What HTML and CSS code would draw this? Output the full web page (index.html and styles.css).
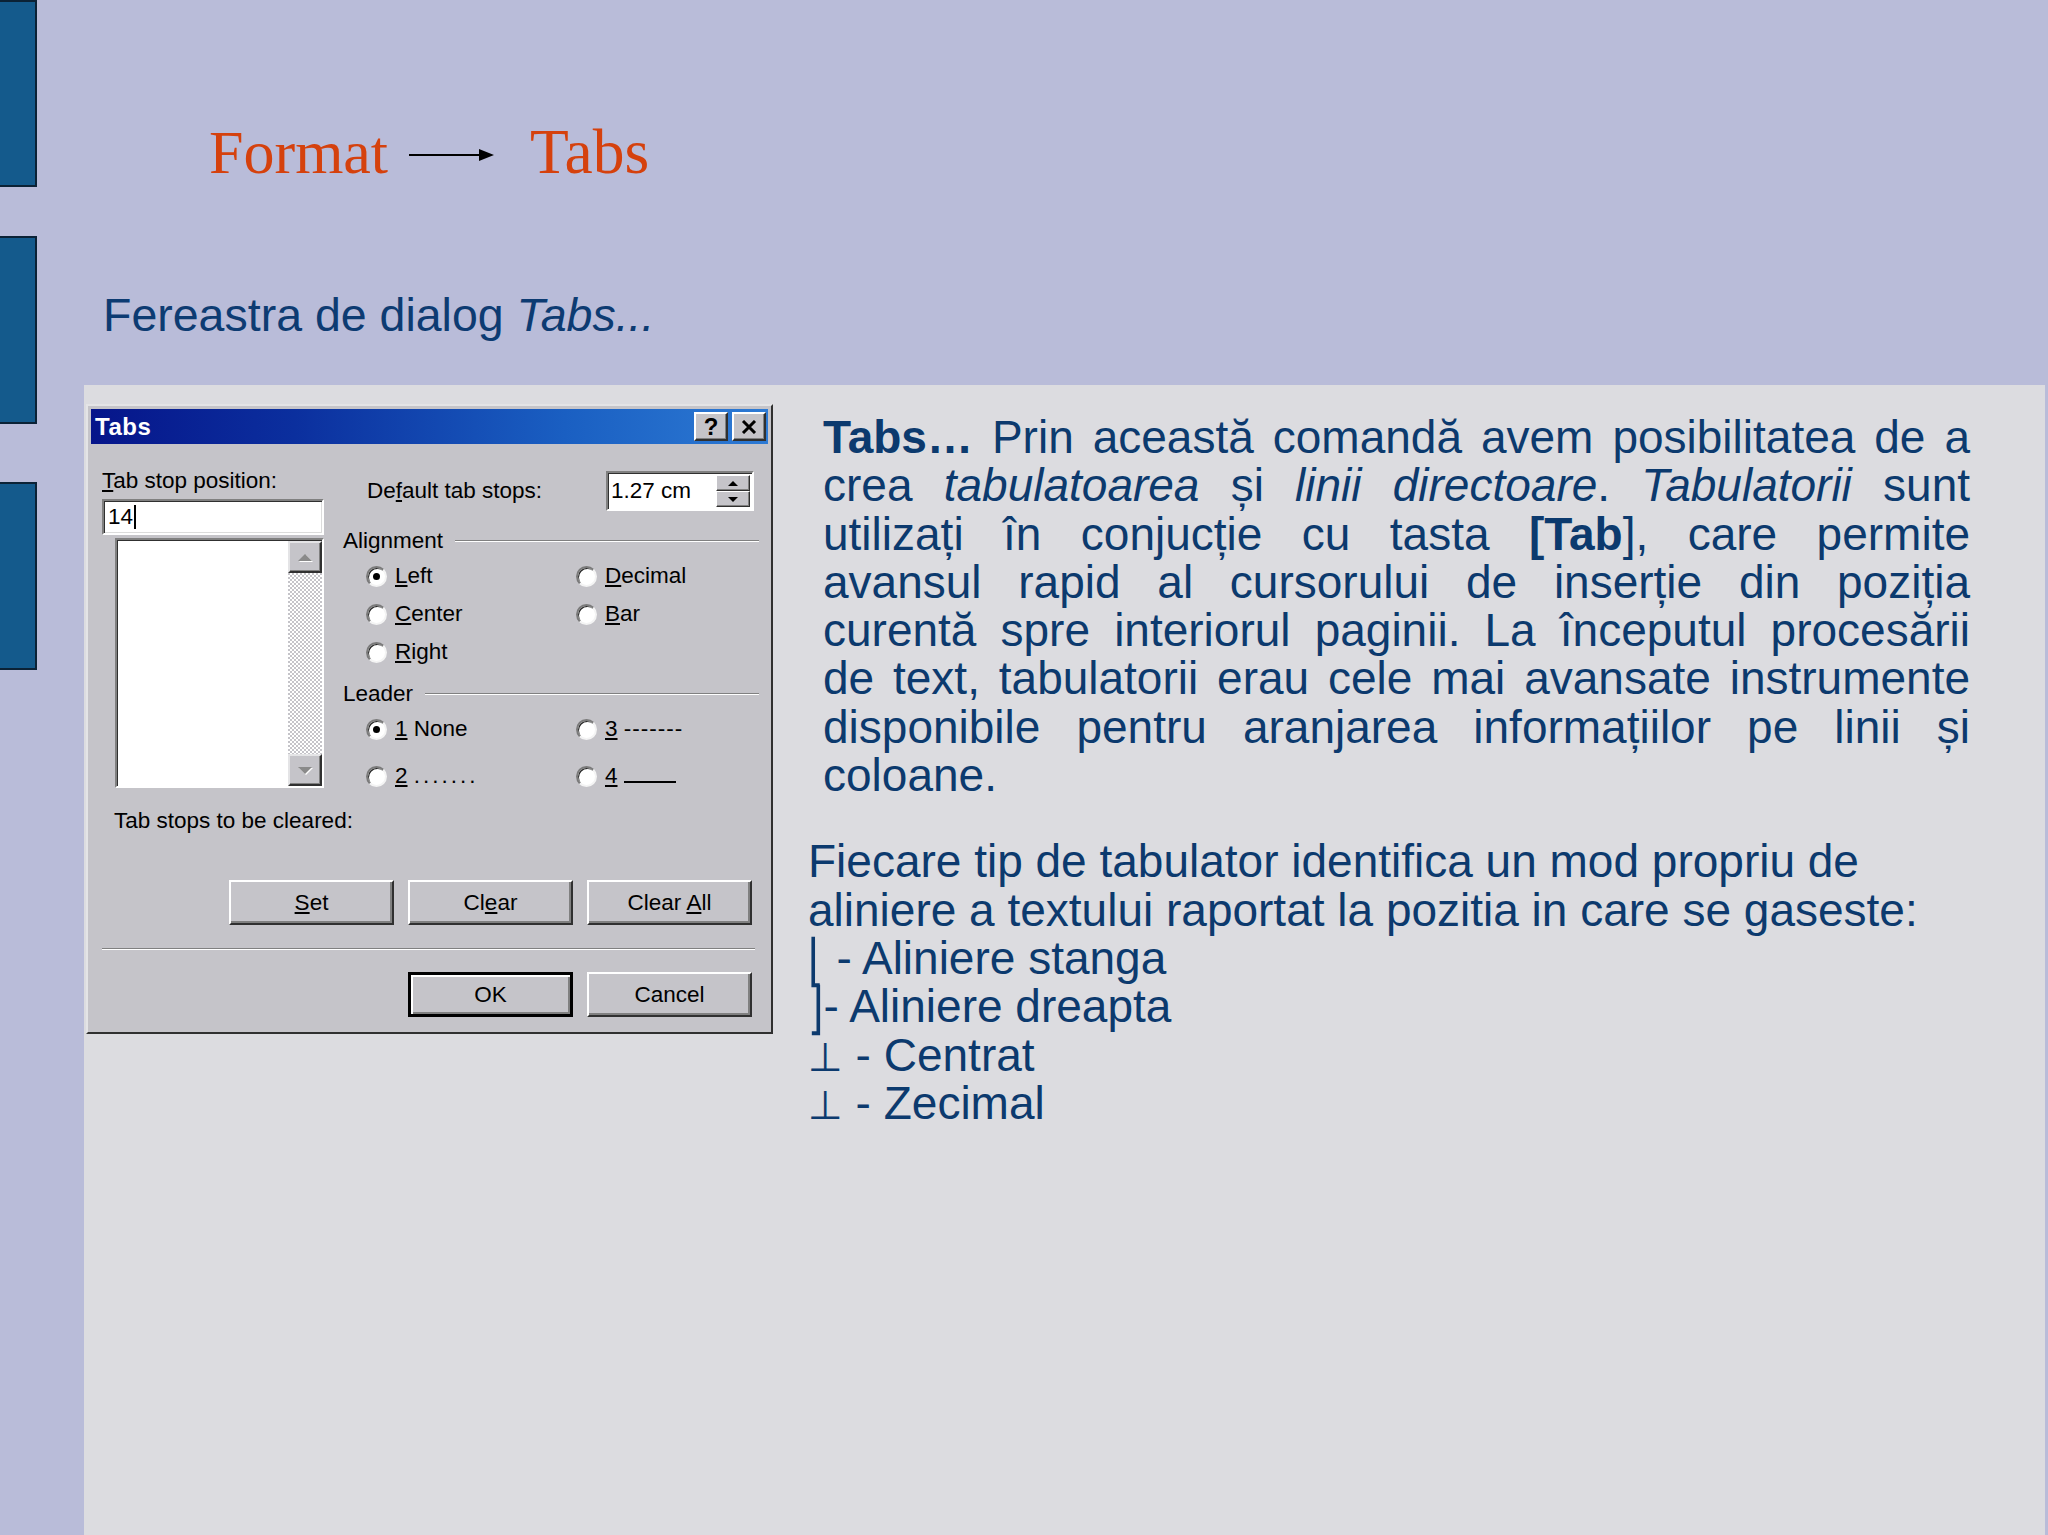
FILE: index.html
```html
<!DOCTYPE html>
<html lang="ro">
<head>
<meta charset="utf-8">
<title>Format - Tabs</title>
<link rel="stylesheet" href="styles.css">
</head>
<body>
<div class="slide">
  <div class="rail">
    <div class="bar bar1"></div>
    <div class="bar bar2"></div>
    <div class="bar bar3"></div>
  </div>
  <div class="main">
    <header class="head">
      <h1 class="title">
        <span>Format</span>
        <svg class="arrow" width="85" height="14" viewBox="0 0 85 14"><line x1="0" y1="7" x2="72" y2="7" stroke="#000" stroke-width="2.2"/><polygon points="70,1 85,7 70,13" fill="#000"/></svg>
        <span>Tabs</span>
      </h1>
      <h2 class="subtitle">Fereastra de dialog <em>Tabs...</em></h2>
    </header>
    <section class="panel">
      <div class="dialog">
        <div class="titlebar">
          <span class="tb-text">Tabs</span>
          <div class="tb-btns">
            <div class="tb-btn">?</div>
            <div class="tb-btn"><svg width="16" height="14" viewBox="0 0 16 14"><path d="M2 1 L14 13 M14 1 L2 13" stroke="#000" stroke-width="3"/></svg></div>
          </div>
        </div>
        <div class="dlg-body">
          <div class="dlg-top">
            <div class="col-left">
              <div class="lbl"><u>T</u>ab stop position:</div>
              <div class="field"><span>14</span><span class="caret"></span></div>
              <div class="listbox">
                <div class="lb-area"></div>
                <div class="vscroll">
                  <div class="sb-btn"><span class="tri-up dis"></span></div>
                  <div class="sb-track"></div>
                  <div class="sb-btn"><span class="tri-down dis"></span></div>
                </div>
              </div>
            </div>
            <div class="col-right">
              <div class="default-row">
                <div class="lbl">De<u>f</u>ault tab stops:</div>
                <div class="spin">
                  <div class="spin-text">1.27 cm</div>
                  <div class="spin-btns">
                    <div class="spin-btn"><span class="tri-up small"></span></div>
                    <div class="spin-btn"><span class="tri-down small"></span></div>
                  </div>
                </div>
              </div>
              <div class="group-head"><span>Alignment</span><span class="etch"></span></div>
              <div class="radios align">
                <div class="opt"><span class="radio on"></span><span><u>L</u>eft</span></div>
                <div class="opt"><span class="radio"></span><span><u>D</u>ecimal</span></div>
                <div class="opt"><span class="radio"></span><span><u>C</u>enter</span></div>
                <div class="opt"><span class="radio"></span><span><u>B</u>ar</span></div>
                <div class="opt"><span class="radio"></span><span><u>R</u>ight</span></div>
              </div>
              <div class="group-head leader"><span>Leader</span><span class="etch"></span></div>
              <div class="radios lead">
                <div class="opt"><span class="radio on"></span><span><u>1</u> None</span></div>
                <div class="opt"><span class="radio"></span><span><u>3</u> <span class="dashes">-------</span></span></div>
                <div class="opt"><span class="radio"></span><span><u>2</u> <span class="dots">.......</span></span></div>
                <div class="opt"><span class="radio"></span><span><u>4</u> <span class="uline"></span></span></div>
              </div>
            </div>
          </div>
          <div class="lbl cleared">Tab stops to be cleared:</div>
          <div class="btn-row first">
            <div class="btn"><span><u>S</u>et</span></div>
            <div class="btn"><span>Cl<u>e</u>ar</span></div>
            <div class="btn"><span>Clear <u>A</u>ll</span></div>
          </div>
          <div class="sep"></div>
          <div class="btn-row">
            <div class="btn default"><span>OK</span></div>
            <div class="btn"><span>Cancel</span></div>
          </div>
        </div>
      </div>
      <div class="desc">
        <p class="p1">
          <span class="ln"><b>Tabs…</b> Prin această comandă avem posibilitatea de a</span>
          <span class="ln">crea <i>tabulatoarea</i> și <i>linii directoare</i>. <i>Tabulatorii</i> sunt</span>
          <span class="ln">utilizați în conjucție cu tasta <b>[Tab</b>], care permite</span>
          <span class="ln">avansul rapid al cursorului de inserție din poziția</span>
          <span class="ln">curentă spre interiorul paginii. La începutul procesării</span>
          <span class="ln">de text, tabulatorii erau cele mai avansate instrumente</span>
          <span class="ln">disponibile pentru aranjarea informațiilor pe linii și</span>
          <span class="ln last">coloane.</span>
        </p>
        <p class="p2">Fiecare tip de tabulator identifica un mod propriu de aliniere a textului raportat la pozitia in care se gaseste:<br><span class="sym br">⌊</span> - Aliniere stanga<br><span class="sym br">⌋</span>- Aliniere dreapta<br><span class="sym tack">⊥</span> - Centrat<br><span class="sym tack">⊥</span> - Zecimal</p>
      </div>
    </section>
  </div>
</div>
</body>
</html>
```

FILE: styles.css
```css
html, body {
  margin: 0;
  padding: 0;
}
body {
  background: #b9bcd9;
  width: 2048px;
  height: 1535px;
  overflow: hidden;
}
.slide {
  display: flex;
  width: 2048px;
  height: 1535px;
}
.rail {
  width: 37px;
  flex: none;
  display: flex;
  flex-direction: column;
}
.bar {
  box-sizing: border-box;
  background: #145a8c;
  border: 2px solid #0b2236;
  border-left: none;
}
.bar1 { height: 187px; }
.bar2 { height: 188px; margin-top: 49px; }
.bar3 { height: 188px; margin-top: 58px; }

.main {
  flex: 1;
  margin-left: 47px;
  margin-right: 3px;
  display: flex;
  flex-direction: column;
}
.head {
  height: 385px;
  flex: none;
}
.title {
  margin: 116px 0 0 125px;
  display: flex;
  align-items: center;
  font-family: "Liberation Serif", "Times New Roman", serif;
  font-weight: normal;
  font-size: 62px;
  line-height: 72px;
  color: #d5410d;
}
.title span:last-child {
  font-size: 63.5px;
}
.arrow {
  margin: 6px 36px 0 21px;
}
.subtitle {
  margin: 100px 0 0 19px;
  font-family: "Liberation Sans", Arial, sans-serif;
  font-weight: normal;
  font-size: 46.5px;
  line-height: 54px;
  color: #0d3b72;
}
.subtitle em { font-style: italic; }

.panel {
  flex: 1;
  background: #dcdce0;
  display: flex;
  align-items: flex-start;
  padding-top: 19px;
}

/* ---------- dialog ---------- */
.dialog {
  margin-left: 2px;
  width: 687px;
  box-sizing: border-box;
  background: #c5c4c9;
  border: 2px solid;
  border-color: #e4e4e6 #303030 #303030 #e4e4e6;
  padding: 3px;
  font-family: "Liberation Sans", Arial, sans-serif;
  font-size: 22.5px;
  color: #000;
}
.titlebar {
  height: 35px;
  display: flex;
  align-items: center;
  justify-content: space-between;
  background: linear-gradient(to right, #06158a 0%, #0b2f9e 30%, #1a5fc2 70%, #2d7ad4 100%);
  padding: 0 2px 0 4px;
}
.tb-text {
  color: #fff;
  font-weight: bold;
  font-size: 24px;
  letter-spacing: 0.5px;
}
.tb-btns {
  display: flex;
  gap: 4px;
}
.tb-btn {
  width: 34px;
  height: 29px;
  box-sizing: border-box;
  background: #c5c4c9;
  border: 2px solid;
  border-color: #fff #303030 #303030 #fff;
  box-shadow: inset -1px -1px 0 #808080;
  display: flex;
  align-items: center;
  justify-content: center;
  font-weight: bold;
  font-size: 24px;
  line-height: 1;
}
.dlg-body {
  padding: 0 0 12px 0;
}
.dlg-top {
  display: flex;
  align-items: flex-start;
}
.lbl {
  line-height: 26px;
  white-space: nowrap;
}
.col-left {
  margin-left: 11px;
  width: 222px;
  display: flex;
  flex-direction: column;
}
.col-left > .lbl {
  margin-top: 24px;
}
.field {
  margin-top: 5px;
  height: 36px;
  box-sizing: border-box;
  background: #fff;
  border: 2px solid;
  border-color: #808080 #fff #fff #808080;
  box-shadow: inset 1px 1px 0 #303030, inset -1px -1px 0 #dcdcdc;
  display: flex;
  align-items: center;
  padding-left: 4px;
}
.caret {
  width: 2px;
  height: 24px;
  background: #000;
  margin-left: 1px;
}
.listbox {
  margin: 3px 0 0 13px;
  width: 209px;
  height: 250px;
  box-sizing: border-box;
  background: #fff;
  border: 2px solid;
  border-color: #808080 #fff #fff #808080;
  box-shadow: inset 1px 1px 0 #303030;
  display: flex;
  padding: 1px 0 0 1px;
}
.lb-area { flex: 1; }
.vscroll {
  width: 34px;
  display: flex;
  flex-direction: column;
}
.sb-btn {
  height: 32px;
  box-sizing: border-box;
  background: #c5c4c9;
  border: 2px solid;
  border-color: #e4e4e6 #303030 #303030 #e4e4e6;
  box-shadow: inset -1px -1px 0 #808080;
  display: flex;
  align-items: center;
  justify-content: center;
}
.sb-track {
  flex: 1;
  background-image: repeating-conic-gradient(#ffffff 0 25%, #c5c4c9 0 50%);
  background-size: 4px 4px;
}
.tri-up, .tri-down {
  width: 0;
  height: 0;
  border-left: 7px solid transparent;
  border-right: 7px solid transparent;
}
.tri-up { border-bottom: 7px solid #000; }
.tri-down { border-top: 7px solid #000; }
.tri-up.dis { border-bottom-color: #8a8a8a; filter: drop-shadow(1px 1px 0 #fff); }
.tri-down.dis { border-top-color: #8a8a8a; filter: drop-shadow(1px 1px 0 #fff); }
.tri-up.small, .tri-down.small {
  border-left-width: 5px;
  border-right-width: 5px;
}
.tri-up.small { border-bottom-width: 5px; }
.tri-down.small { border-top-width: 5px; }

.col-right {
  margin-left: 19px;
  width: 416px;
  display: flex;
  flex-direction: column;
}
.default-row {
  margin-top: 27px;
  height: 40px;
  display: flex;
  align-items: center;
  justify-content: space-between;
  padding: 0 5px 0 24px;
}
.spin {
  width: 148px;
  height: 40px;
  box-sizing: border-box;
  background: #fff;
  border: 2px solid;
  border-color: #808080 #fff #fff #808080;
  box-shadow: inset 1px 1px 0 #303030;
  display: flex;
  padding: 2px 2px 2px 3px;
}
.spin-text {
  flex: 1;
  line-height: 32px;
}
.spin-btns {
  width: 34px;
  display: flex;
  flex-direction: column;
}
.spin-btn {
  flex: 1;
  box-sizing: border-box;
  background: #c5c4c9;
  border: 1px solid;
  border-color: #fff #303030 #303030 #fff;
  box-shadow: inset -1px -1px 0 #808080;
  display: flex;
  align-items: center;
  justify-content: center;
}
.group-head {
  margin-top: 17px;
  display: flex;
  align-items: center;
  line-height: 26px;
}
.group-head.leader { margin-top: 10px; }
.etch {
  flex: 1;
  height: 0;
  border-top: 1px solid #808080;
  border-bottom: 1px solid #fff;
  margin-left: 12px;
}
.radios {
  display: grid;
  grid-template-columns: 210px 1fr;
  padding-left: 23px;
}
.radios.align {
  margin-top: 3px;
  grid-auto-rows: 38px;
}
.radios.lead {
  margin-top: 3px;
  grid-auto-rows: 38px;
  row-gap: 9px;
}
.opt {
  display: flex;
  align-items: center;
  gap: 8px;
  white-space: nowrap;
}
.radio {
  position: relative;
  flex: none;
  width: 21px;
  height: 21px;
  box-sizing: border-box;
  border-radius: 50%;
  background: #fff;
  border: 2px solid;
  border-color: #7a7a7a #f4f4f4 #f4f4f4 #7a7a7a;
  box-shadow: inset 1px 1px 0 #2a2a2a;
}
.radio.on::after {
  content: "";
  position: absolute;
  left: 5px;
  top: 5px;
  width: 7px;
  height: 7px;
  border-radius: 50%;
  background: #000;
}
.dashes { letter-spacing: 1px; }
.dots { letter-spacing: 3px; }
.uline {
  display: inline-block;
  width: 52px;
  height: 16px;
  border-bottom: 2px solid #000;
  vertical-align: baseline;
}
.cleared {
  margin: 13px 0 0 23px;
}
.btn-row {
  display: flex;
  justify-content: flex-end;
  gap: 14px;
  padding-right: 16px;
  margin-top: 22px;
}
.btn-row.first {
  margin-top: 46px;
}
.btn {
  width: 165px;
  height: 45px;
  box-sizing: border-box;
  background: #c5c4c9;
  border: 2px solid;
  border-color: #fff #303030 #303030 #fff;
  box-shadow: inset -2px -2px 0 #808080;
  display: flex;
  align-items: center;
  justify-content: center;
}
.btn.default {
  border: 3px solid #000;
  box-shadow: inset 2px 2px 0 #fff, inset -2px -2px 0 #808080;
}
.sep {
  margin: 23px 13px 0 11px;
  height: 0;
  border-top: 1px solid #808080;
  border-bottom: 1px solid #fff;
}

/* ---------- text ---------- */
.desc {
  margin-left: 35px;
  width: 1162px;
  font-family: "Liberation Sans", Arial, sans-serif;
  font-size: 46px;
  line-height: 48.3px;
  color: #0c3a6e;
}
.p1 {
  margin: 9px 0 0 15px;
}
.ln {
  display: block;
  text-align: justify;
  text-align-last: justify;
  white-space: nowrap;
}
.ln.last {
  text-align-last: left;
}
.p2 {
  margin: 38px 0 0 0;
  text-align: left;
}
.sym {
  font-family: "DejaVu Sans", sans-serif;
  font-weight: normal;
  line-height: 0;
}
.sym.br {
  display: inline-block;
  font-size: 40px;
  transform: scaleY(1.42);
  transform-origin: 50% 80%;
}
.sym.tack {
  font-size: 40px;
}
```
